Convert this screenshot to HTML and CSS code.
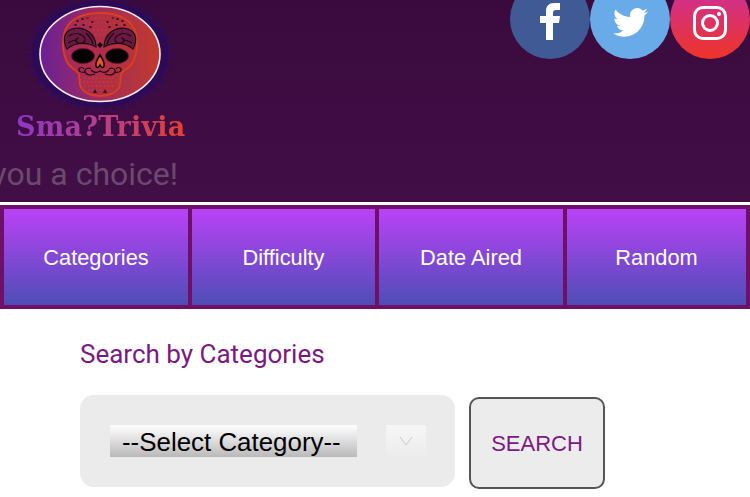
FILE: index.html
```html
<!DOCTYPE html>
<html lang="en">
<head>
<meta charset="utf-8">
<title>SmaTrivia</title>
<link rel="stylesheet" href="styles.css">
</head>
<body>
<header class="site-header">
  <div class="brand">
    <svg class="logo" viewBox="0 0 170 110" width="170" height="110" aria-hidden="true">
      <defs>
        <linearGradient id="disc" x1="0" x2="1" y1="0" y2="0">
          <stop offset="0" stop-color="#6a2096"/>
          <stop offset="0.45" stop-color="#9d2a62"/>
          <stop offset="1" stop-color="#c23a2b"/>
        </linearGradient>
        <linearGradient id="bone" x1="0" x2="1" y1="0" y2="0">
          <stop offset="0" stop-color="#a52a5a"/>
          <stop offset="1" stop-color="#b93336"/>
        </linearGradient>
        <g id="wing">
          <path d="M50 35C54 27 66 26 74 32 79 36 81 42 81 47 72 42 60 42 52 49 49 44 49 39 50 35Z" fill="#6a1a40" stroke="#160712" stroke-width="1.200"/>
          <path d="M54 36c5-4 12-3 15 1s-1 7-5 6-4-5 0-5M53 43c3-2 6-3 9-3M71 33c3 3 6 7 7 11" fill="none" stroke="#160712" stroke-width="1.100"/>
          <path d="M70 72c-4 1-7-1-6-3s4-2 5 0M80 74c-5 2-9 1-10-2s3-5 6-3" fill="none" stroke="#160712" stroke-width="1.100"/>
          <ellipse cx="68" cy="56" rx="11.500" ry="7.500" fill="#040203" stroke="#6a1530" stroke-width="1"/>
          <path d="M62 21h1M67 19h1M72 18h1M77 22h1M60 25h1M68 25h1M75 27h1" stroke="#1a0712" stroke-width="1.600" stroke-linecap="round"/>
        </g>
      </defs>
      <ellipse cx="85" cy="54" rx="69" ry="54" fill="none" stroke="#2f0b5c" stroke-width="7" stroke-dasharray="4 5" opacity="0.8"/>
      <ellipse cx="85" cy="54" rx="68" ry="53" fill="#2d0a58"/>
      <ellipse cx="85" cy="54" rx="60" ry="47.500" fill="url(#disc)" stroke="#fbeef0" stroke-width="1.600"/>
      <path d="M85 13C66 13 52 20 49 34 47 44 48 54 52 62 55 68 62 70 64 74L65 85C67 92 75 96 85 96 95 96 103 92 105 85L106 74C108 70 115 68 118 62 122 54 123 44 121 34 118 20 104 13 85 13Z" fill="url(#bone)" stroke="#d8401f" stroke-width="1.800"/>
      <use href="#wing"/>
      <use href="#wing" transform="translate(170 0) scale(-1 1)"/>
      <path d="M85 55c-2 3-5 8-4 11s3 1 4-1c1 2 3 4 4 1s-2-8-4-11z" fill="#e0582c" stroke="#120610" stroke-width="1.600"/>
      <path d="M85 42l3 3-3 3-3-3z" fill="#16060f"/>
      <path d="M76 70c3 3 6 3 9 1 3 2 6 2 9-1" fill="none" stroke="#160712" stroke-width="1.100"/>
      <g fill="none" stroke="#d8401f" stroke-width="1" stroke-dasharray="1.500 2.500">
        <path d="M69 78h32M68 82h34M69 86h32M73 90h24"/>
        <path d="M72 18h26M70 23h30M78 30h14M80 35h10"/>
      </g>
      <path d="M78 93l2-4 2 4zM88 93l2-4 2 4z" fill="#2a0a1a"/>
    </svg>
    <div class="wordmark">Sma?Trivia</div>
    <div class="ticker"><span>Trivia gives you a choice!</span></div>
  </div>
  <nav class="social" aria-label="Social">
    <a class="circle fb" href="#"><svg viewBox="0 0 20 37" width="20" height="37"><path fill="#fff" d="M6 37V20H0v-7h6V8c0-5 3-8 8-8h6v7h-4c-2 0-3 1-3 3v3h7l-1 7h-6v17z"/></svg></a>
    <a class="circle tw" href="#"><svg viewBox="0 0 24 24" width="35" height="35"><path fill="#fff" d="M23.953 4.57a10 10 0 01-2.825.775 4.958 4.958 0 002.163-2.723c-.951.555-2.005.959-3.127 1.184a4.92 4.92 0 00-8.384 4.482C7.69 8.095 4.067 6.13 1.64 3.162a4.822 4.822 0 00-.666 2.475c0 1.71.87 3.213 2.188 4.096a4.904 4.904 0 01-2.228-.616v.06a4.923 4.923 0 003.946 4.827 4.996 4.996 0 01-2.212.085 4.936 4.936 0 004.604 3.417 9.867 9.867 0 01-6.102 2.105c-.39 0-.779-.023-1.17-.067a13.995 13.995 0 007.557 2.209c9.053 0 13.998-7.496 13.998-13.985 0-.21 0-.42-.015-.63A9.935 9.935 0 0024 4.59z"/></svg></a>
    <a class="circle ig" href="#"><svg viewBox="0 0 34 34" width="34" height="34"><rect x="1.500" y="1.500" width="31" height="31" rx="8.500" fill="none" stroke="#fff" stroke-width="3"/><circle cx="17" cy="17" r="7.500" fill="none" stroke="#fff" stroke-width="3"/><circle cx="26" cy="8" r="2" fill="#fff"/></svg></a>
  </nav>
</header>
<nav class="tabs">
  <a class="tab" href="#">Categories</a>
  <a class="tab" href="#">Difficulty</a>
  <a class="tab" href="#">Date Aired</a>
  <a class="tab" href="#">Random</a>
</nav>
<main class="search">
  <h1 class="search-title">Search by Categories</h1>
  <form class="search-row">
    <div class="select-well">
      <div class="select-value">--Select Category--</div>
      <div class="select-arrow"><svg viewBox="0 0 14 10" width="14" height="10"><path d="M1 1l6 8 6-8" fill="none" stroke="#c9c9c9" stroke-width="1"/></svg></div>
    </div>
    <button class="search-btn" type="button">SEARCH</button>
  </form>
</main>
</body>
</html>
```
FILE: styles.css
```css
* { box-sizing: border-box; }
html, body { margin: 0; padding: 0; }
body {
  width: 750px;
  height: 497px;
  overflow: hidden;
  background: #fff;
  font-family: "Liberation Sans", Arial, sans-serif;
}
.site-header {
  height: 202px;
  display: flex;
  justify-content: space-between;
  align-items: flex-start;
  background: linear-gradient(180deg, #3a0a3e 0%, #420e46 100%);
  overflow: hidden;
}
.brand { width: 190px; display: flex; flex-direction: column; }
.logo { display: block; margin-left: 15px; height: 110px; }
.wordmark {
  margin-top: 2px;
  margin-left: 16px;
  width: 170px;
  font-family: "DejaVu Serif", serif;
  font-weight: 700;
  font-size: 27px;
  letter-spacing: 0.2px;
  line-height: 30px;
  white-space: nowrap;
  background: linear-gradient(90deg, #8e36c6 0%, #b23f94 45%, #e4402c 100%);
  -webkit-background-clip: text;
  background-clip: text;
  color: transparent;
}
.ticker {
  margin-top: 12px;
  width: 178px;
  display: flex;
  justify-content: flex-end;
  overflow: hidden;
  white-space: nowrap;
  font-family: Roboto, sans-serif;
  font-size: 32px;
  line-height: 40px;
  color: #6a4a70;
}
.ticker span { flex: none; }
.social { display: flex; margin-top: -21px; }
.circle {
  width: 80px;
  height: 80px;
  border-radius: 50%;
  display: flex;
  align-items: flex-end;
  justify-content: center;
  padding-bottom: 19px;
}
.fb { background: #3f5a94; }
.tw { background: #69aae9; }
.ig { background: linear-gradient(180deg, #c92fa8 0%, #ee3427 100%); }
.tabs {
  margin-top: 3px;
  height: 104px;
  display: grid;
  grid-template-columns: 184px 183px 184px 179px;
  gap: 4px;
  padding: 4px;
  background: #6f1068;
}
.tab {
  display: flex;
  align-items: center;
  justify-content: center;
  padding-top: 1px;
  background: linear-gradient(180deg, #ba42f7 0%, #4e4db6 100%);
  color: #fff;
  font-size: 21.800px;
  text-decoration: none;
}
.search { padding: 28px 0 0 80px; }
.search-title {
  margin: 0;
  font-family: Roboto, sans-serif;
  font-weight: 400;
  font-size: 26px;
  line-height: 34px;
  color: #7a1a80;
}
.search-row { margin-top: 24px; display: flex; align-items: flex-start; gap: 14px; }
.select-well {
  width: 375px;
  height: 92px;
  padding: 30px;
  display: flex;
  gap: 29px;
  background: #ebebeb;
  border-radius: 14px;
}
.select-value {
  flex: none;
  width: 247px;
  height: 32px;
  padding-left: 12px;
  background: linear-gradient(180deg, #fdfdfd 0%, #efefef 25%, #b9b9b9 100%);
  color: #000;
  font-size: 25.900px;
  line-height: 35px;
  white-space: nowrap;
  overflow: hidden;
}
.select-arrow {
  flex: none;
  width: 40px;
  height: 32px;
  display: flex;
  align-items: center;
  justify-content: center;
  background: linear-gradient(180deg, #f6f6f6, #ececec);
}
.search-btn {
  margin-top: 2px;
  width: 136px;
  height: 92px;
  padding: 2px 0 0;
  background: #ececec;
  border: 2px solid #555;
  border-radius: 10px;
  color: #7b1a82;
  font-family: "Liberation Sans", Arial, sans-serif;
  font-size: 22px;
}
```
